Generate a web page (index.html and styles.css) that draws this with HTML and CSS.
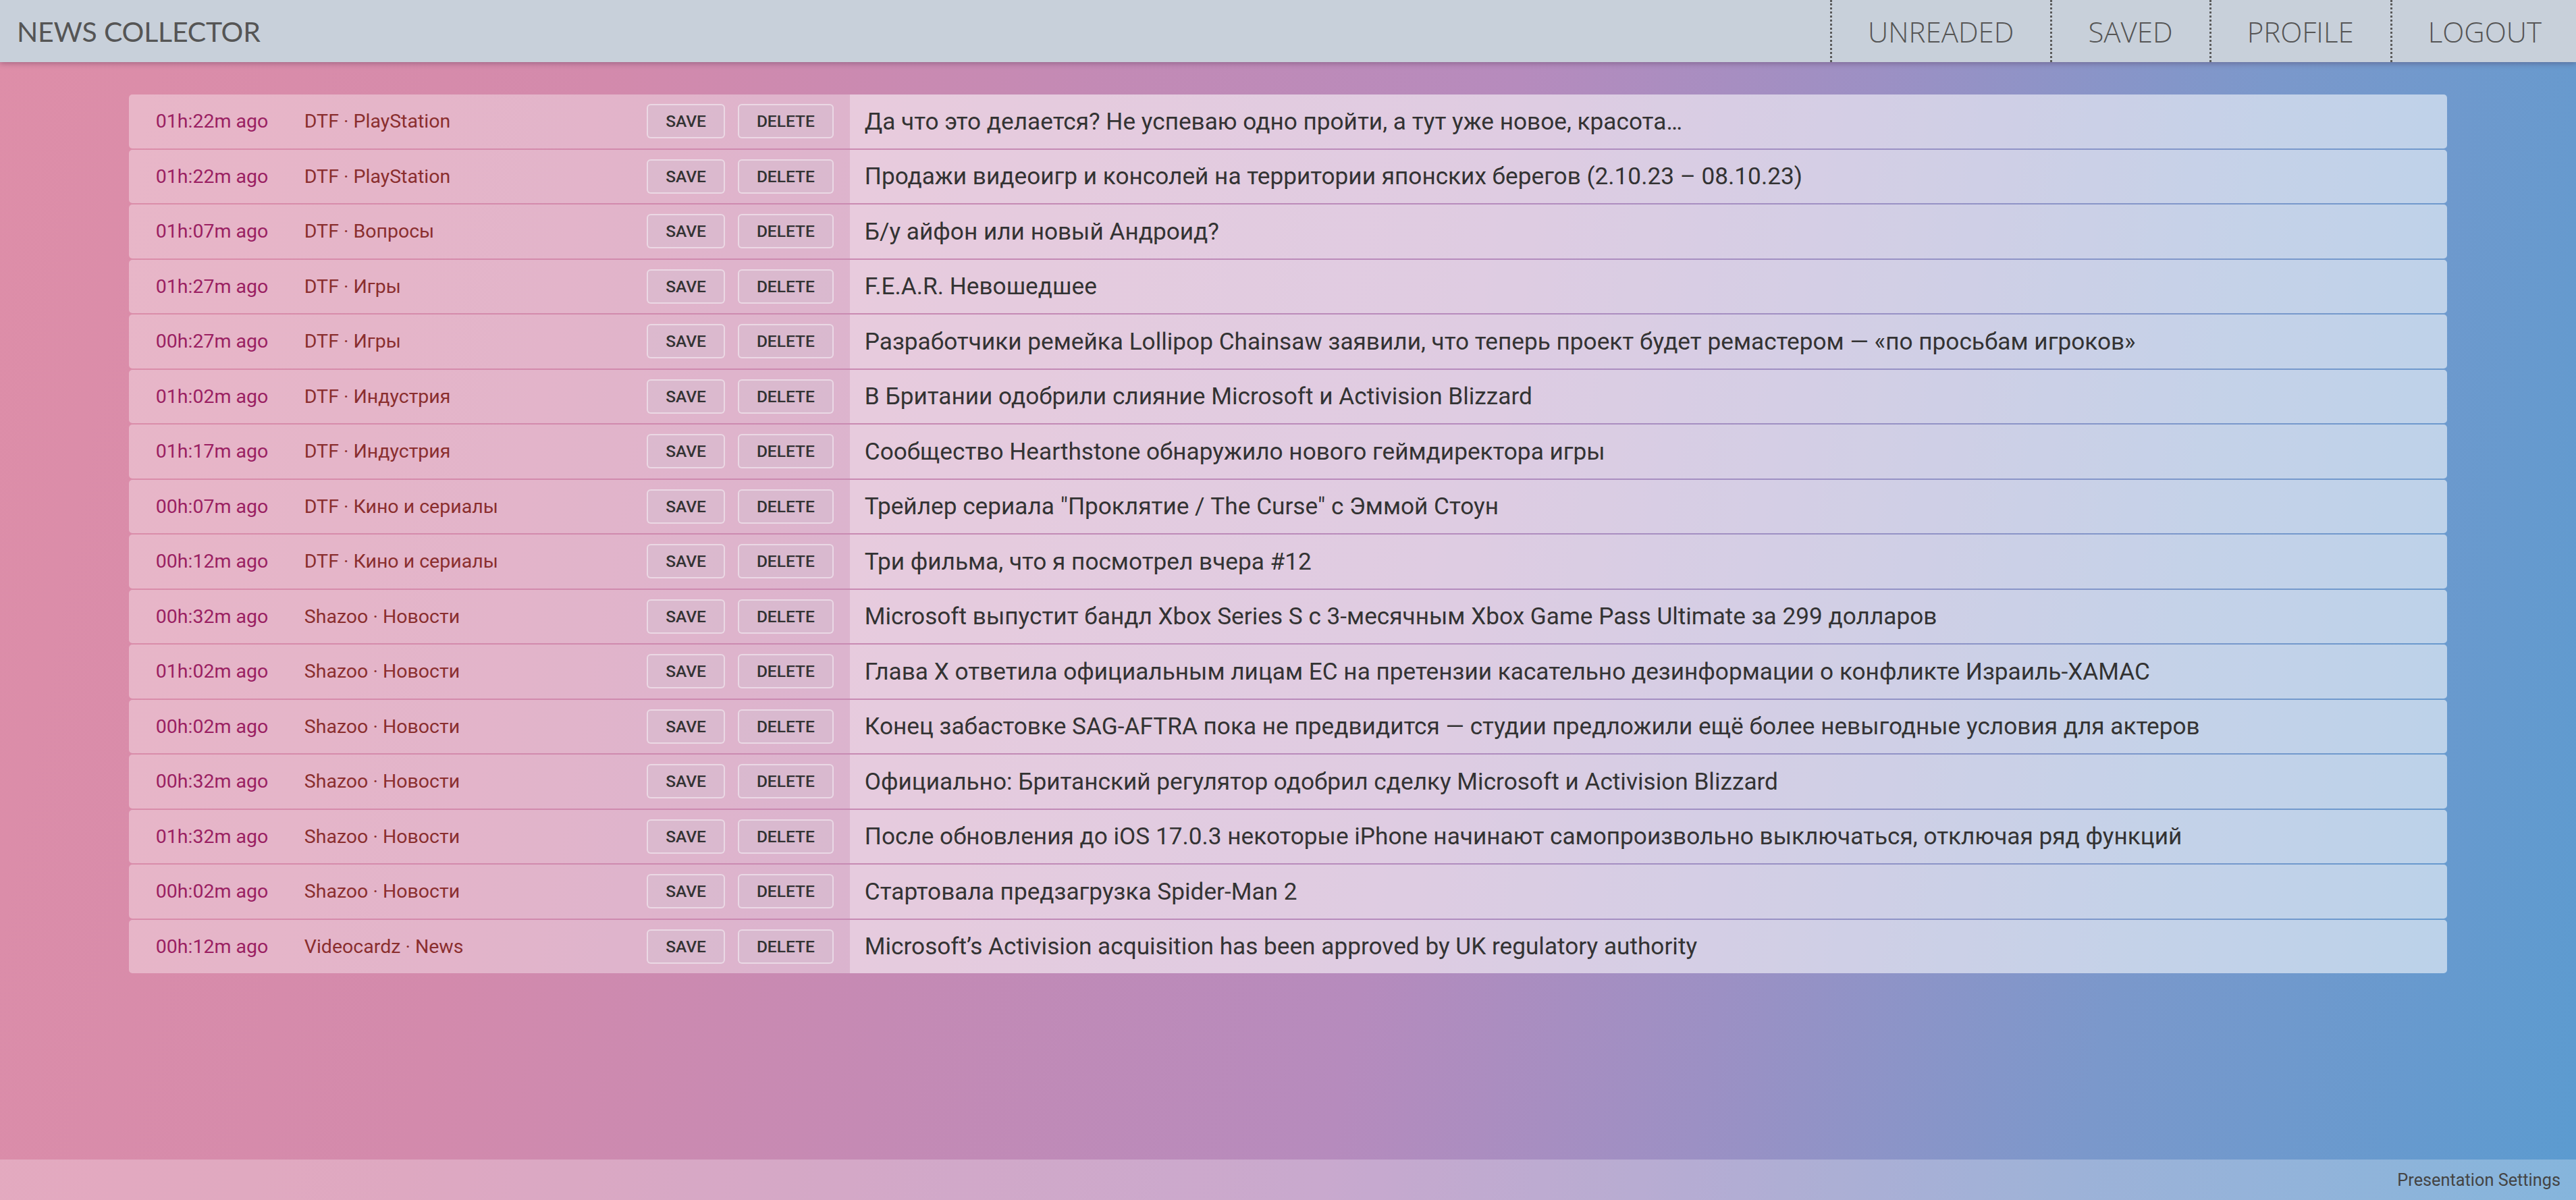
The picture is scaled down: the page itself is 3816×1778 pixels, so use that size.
FILE: index.html
```html
<!DOCTYPE html>
<html lang="ru">
<head>
<meta charset="utf-8">
<title>News Collector</title>
<link rel="stylesheet" href="styles.css">
</head>
<body>
<div class="page">
  <header class="topbar">
    <div class="brand">NEWS COLLECTOR</div>
    <nav class="nav">
      <a class="nav-item">UNREADED</a>
      <a class="nav-item">SAVED</a>
      <a class="nav-item">PROFILE</a>
      <a class="nav-item last">LOGOUT</a>
    </nav>
  </header>

  <main class="content">
    <div class="list">
      <div class="row"><div class="meta"><span class="time">01h:22m ago</span><span class="source">DTF · PlayStation</span><span class="actions"><button class="btn">SAVE</button><button class="btn">DELETE</button></span></div><div class="title">Да что это делается? Не успеваю одно пройти, а тут уже новое, красота…</div></div>
      <div class="row"><div class="meta"><span class="time">01h:22m ago</span><span class="source">DTF · PlayStation</span><span class="actions"><button class="btn">SAVE</button><button class="btn">DELETE</button></span></div><div class="title">Продажи видеоигр и консолей на территории японских берегов (2.10.23 – 08.10.23)</div></div>
      <div class="row"><div class="meta"><span class="time">01h:07m ago</span><span class="source">DTF · Вопросы</span><span class="actions"><button class="btn">SAVE</button><button class="btn">DELETE</button></span></div><div class="title">Б/у айфон или новый Андроид?</div></div>
      <div class="row"><div class="meta"><span class="time">01h:27m ago</span><span class="source">DTF · Игры</span><span class="actions"><button class="btn">SAVE</button><button class="btn">DELETE</button></span></div><div class="title">F.E.A.R. Невошедшее</div></div>
      <div class="row"><div class="meta"><span class="time">00h:27m ago</span><span class="source">DTF · Игры</span><span class="actions"><button class="btn">SAVE</button><button class="btn">DELETE</button></span></div><div class="title">Разработчики ремейка Lollipop Chainsaw заявили, что теперь проект будет ремастером — «по просьбам игроков»</div></div>
      <div class="row"><div class="meta"><span class="time">01h:02m ago</span><span class="source">DTF · Индустрия</span><span class="actions"><button class="btn">SAVE</button><button class="btn">DELETE</button></span></div><div class="title">В Британии одобрили слияние Microsoft и Activision Blizzard</div></div>
      <div class="row"><div class="meta"><span class="time">01h:17m ago</span><span class="source">DTF · Индустрия</span><span class="actions"><button class="btn">SAVE</button><button class="btn">DELETE</button></span></div><div class="title">Сообщество Hearthstone обнаружило нового геймдиректора игры</div></div>
      <div class="row"><div class="meta"><span class="time">00h:07m ago</span><span class="source">DTF · Кино и сериалы</span><span class="actions"><button class="btn">SAVE</button><button class="btn">DELETE</button></span></div><div class="title">Трейлер сериала "Проклятие / The Curse" с Эммой Стоун</div></div>
      <div class="row"><div class="meta"><span class="time">00h:12m ago</span><span class="source">DTF · Кино и сериалы</span><span class="actions"><button class="btn">SAVE</button><button class="btn">DELETE</button></span></div><div class="title">Три фильма, что я посмотрел вчера #12</div></div>
      <div class="row"><div class="meta"><span class="time">00h:32m ago</span><span class="source">Shazoo · Новости</span><span class="actions"><button class="btn">SAVE</button><button class="btn">DELETE</button></span></div><div class="title">Microsoft выпустит бандл Xbox Series S с 3-месячным Xbox Game Pass Ultimate за 299 долларов</div></div>
      <div class="row"><div class="meta"><span class="time">01h:02m ago</span><span class="source">Shazoo · Новости</span><span class="actions"><button class="btn">SAVE</button><button class="btn">DELETE</button></span></div><div class="title">Глава X ответила официальным лицам ЕС на претензии касательно дезинформации о конфликте Израиль-ХАМАС</div></div>
      <div class="row"><div class="meta"><span class="time">00h:02m ago</span><span class="source">Shazoo · Новости</span><span class="actions"><button class="btn">SAVE</button><button class="btn">DELETE</button></span></div><div class="title">Конец забастовке SAG-AFTRA пока не предвидится — студии предложили ещё более невыгодные условия для актеров</div></div>
      <div class="row"><div class="meta"><span class="time">00h:32m ago</span><span class="source">Shazoo · Новости</span><span class="actions"><button class="btn">SAVE</button><button class="btn">DELETE</button></span></div><div class="title">Официально: Британский регулятор одобрил сделку Microsoft и Activision Blizzard</div></div>
      <div class="row"><div class="meta"><span class="time">01h:32m ago</span><span class="source">Shazoo · Новости</span><span class="actions"><button class="btn">SAVE</button><button class="btn">DELETE</button></span></div><div class="title">После обновления до iOS 17.0.3 некоторые iPhone начинают самопроизвольно выключаться, отключая ряд функций</div></div>
      <div class="row"><div class="meta"><span class="time">00h:02m ago</span><span class="source">Shazoo · Новости</span><span class="actions"><button class="btn">SAVE</button><button class="btn">DELETE</button></span></div><div class="title">Стартовала предзагрузка Spider-Man 2</div></div>
      <div class="row"><div class="meta"><span class="time">00h:12m ago</span><span class="source">Videocardz · News</span><span class="actions"><button class="btn">SAVE</button><button class="btn">DELETE</button></span></div><div class="title">Microsoft’s Activision acquisition has been approved by UK regulatory authority</div></div>
    </div>
  </main>

  <footer class="footer">
    <a class="footer-link">Presentation Settings</a>
  </footer>
</div>
</body>
</html>
```

FILE: styles.css
```css
html, body {
  margin: 0;
  padding: 0;
  height: 100%;
}

body {
  font-family: Roboto, "Noto Sans", sans-serif;
  background: linear-gradient(100deg, #de8ea8 0%, #d38aac 22%, #c58ab4 38%, #b68bbd 55%, #9c90c4 68%, #7b98cb 82%, #5b9bd0 100%);
  color: #333;
}

.page {
  min-height: 100vh;
  display: flex;
  flex-direction: column;
}

.topbar {
  height: 92px;
  background: #c8d0da;
  display: flex;
  align-items: stretch;
  justify-content: space-between;
  box-shadow: 0 2px 8px rgba(60, 30, 60, 0.35);
  position: relative;
  z-index: 1;
}

.brand {
  font-family: Lato, "Open Sans", sans-serif;
  font-size: 41px;
  color: #555;
  padding-left: 25px;
  display: flex;
  align-items: center;
  letter-spacing: -0.2px;
}

.nav {
  display: flex;
  align-items: stretch;
}

.nav-item {
  font-family: "Open Sans", sans-serif;
  font-weight: 300;
  font-size: 42px;
  color: #555;
  display: flex;
  align-items: center;
  padding: 0 54px 0 53px;
  border-left: 3px dotted #5a5a5a;
  cursor: pointer;
}

.nav-item.last {
  padding-right: 51px;
}

.content {
  flex: 1;
  padding-top: 48px;
}

.list {
  width: 90%;
  margin: 0 auto;
  display: flex;
  flex-direction: column;
  gap: 2px;
}

.row {
  height: 79.5px;
  display: flex;
  border-radius: 5px;
  overflow: hidden;
}

.meta {
  width: 1068px;
  flex: none;
  display: flex;
  align-items: center;
  padding: 0 24px 0 40px;
  box-sizing: border-box;
  background: rgba(255, 255, 255, 0.36);
  font-size: 28.5px;
}

.time {
  width: 220px;
  flex: none;
  color: #9a1f62;
}

.source {
  flex: 1;
  color: #8a2e2e;
}

.actions {
  display: flex;
  gap: 19px;
}

.btn {
  font-family: Roboto, sans-serif;
  font-weight: 500;
  font-size: 24.5px;
  color: #333;
  height: 51px;
  padding: 0 26px;
  background: rgba(212, 192, 210, 0.4);
  border: 2px solid rgba(255, 255, 255, 0.45);
  border-radius: 6px;
  cursor: pointer;
}

.title {
  flex: 1;
  display: flex;
  align-items: center;
  padding-left: 22px;
  background: rgba(255, 255, 255, 0.56);
  font-size: 35.2px;
  color: #333;
  white-space: nowrap;
  overflow: hidden;
}

.footer {
  height: 60px;
  background: rgba(255, 255, 255, 0.26);
  display: flex;
  align-items: center;
  justify-content: flex-end;
  padding-right: 23px;
}

.footer-link {
  font-size: 25.3px;
  color: #444;
  cursor: pointer;
}
```
